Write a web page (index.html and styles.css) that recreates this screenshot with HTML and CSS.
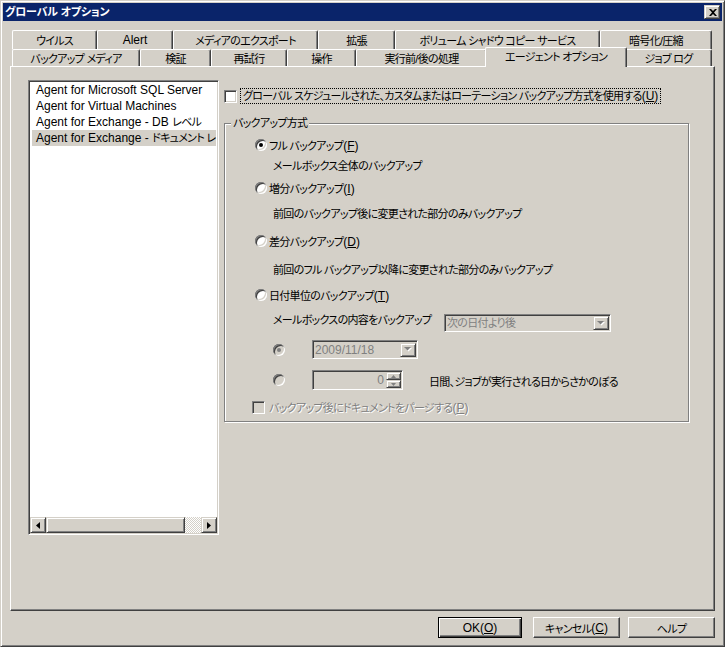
FILE: index.html
```html
<!DOCTYPE html>
<html lang="ja">
<head>
    <meta charset="UTF-8">
    <title>グローバル オプション</title>
    <link rel="stylesheet" href="styles.css">
</head>
<body>
    <div class="window">
        <div class="titlebar">
            <span class="title">グローバル オプション</span>
            <span class="close-btn raised">
                <svg width="8" height="7" viewBox="0 0 8 7"><path d="M0 0h2l2 2 2-2h2L5 3.5 8 7H6L4 5 2 7H0l3-3.5z" fill="#000"/></svg>
            </span>
        </div>

        <div class="content">
            <div class="tabs">
                <div class="tab-row row-top">
                    <div class="tab">ウイルス</div>
                    <div class="tab"><span class="lat">Alert</span></div>
                    <div class="tab">メディアのエクスポート</div>
                    <div class="tab">拡張</div>
                    <div class="tab">ボリューム シャドウ コピー サービス</div>
                    <div class="tab">暗号化/圧縮</div>
                </div>
                <div class="tab-row row-bottom">
                    <div class="tab">バックアップ メディア</div>
                    <div class="tab">検証</div>
                    <div class="tab">再試行</div>
                    <div class="tab">操作</div>
                    <div class="tab">実行前/後の処理</div>
                    <div class="tab active">エージェント オプション</div>
                    <div class="tab">ジョブ ログ</div>
                </div>
            </div>

            <div class="panel">
                <div class="agent-list sunken">
                    <ul class="items">
                        <li>Agent for Microsoft SQL Server</li>
                        <li>Agent for Virtual Machines</li>
                        <li>Agent for Exchange - DB <span class="jp">レベル</span></li>
                        <li class="selected">Agent for Exchange - <span class="jp">ドキュメント レベル</span></li>
                    </ul>
                    <div class="hscroll">
                        <span class="sb-btn raised">
                            <svg width="4" height="7" viewBox="0 0 4 7"><path d="M4 0v7L0 3.5z" fill="#000"/></svg>
                        </span>
                        <span class="sb-thumb raised"></span>
                        <span class="sb-track"></span>
                        <span class="sb-btn raised">
                            <svg width="4" height="7" viewBox="0 0 4 7"><path d="M0 0v7L4 3.5z" fill="#000"/></svg>
                        </span>
                    </div>
                </div>

                <div class="options">
                    <div class="check-row">
                        <span class="checkbox"></span>
                        <span class="focus-label">グローバル スケジュールされた、カスタムまたはローテーション バックアップ方式を使用する<span class="lat">(<u>U</u>)</span></span>
                    </div>

                    <div class="group">
                        <div class="group-title">バックアップ方式</div>

                        <div class="radio-row gap-7">
                            <span class="radio checked"></span>
                            <span>フル バックアップ<span class="lat">(<u>F</u>)</span></span>
                        </div>
                        <div class="desc gap-5">メールボックス全体のバックアップ</div>

                        <div class="radio-row gap-6">
                            <span class="radio"></span>
                            <span>増分バックアップ<span class="lat">(<u>I</u>)</span></span>
                        </div>
                        <div class="desc gap-10">前回のバックアップ後に変更された部分のみバックアップ</div>

                        <div class="radio-row gap-11">
                            <span class="radio"></span>
                            <span>差分バックアップ<span class="lat">(<u>D</u>)</span></span>
                        </div>
                        <div class="desc gap-13">前回のフル バックアップ以降に変更された部分のみバックアップ</div>

                        <div class="radio-row gap-9">
                            <span class="radio"></span>
                            <span>日付単位のバックアップ<span class="lat">(<u>T</u>)</span></span>
                        </div>

                        <div class="mailbox-row gap-11">
                            <span class="mailbox-label">メールボックスの内容をバックアップ</span>
                            <div class="combo sunken wide">
                                <span class="combo-text">次の日付より後</span>
                                <span class="combo-btn raised">
                                    <svg width="8" height="5" viewBox="0 0 8 5"><path d="M1 1h7L4.5 4.5z" fill="#fff"/><path d="M0 0h7L3.5 3.5z" fill="#808080"/></svg>
                                </span>
                            </div>
                        </div>

                        <div class="sub-row date-row gap-8">
                            <span class="radio disabled checked"></span>
                            <div class="combo sunken date">
                                <span class="combo-text lat">2009/11/18</span>
                                <span class="combo-btn raised">
                                    <svg width="8" height="5" viewBox="0 0 8 5"><path d="M1 1h7L4.5 4.5z" fill="#fff"/><path d="M0 0h7L3.5 3.5z" fill="#808080"/></svg>
                                </span>
                            </div>
                        </div>

                        <div class="sub-row spin-row gap-11">
                            <span class="radio disabled"></span>
                            <div class="spin sunken">
                                <span class="spin-value lat">0</span>
                                <span class="spin-btns">
                                    <span class="spin-btn raised">
                                        <svg width="5" height="3" viewBox="0 0 5 3"><path d="M0 3h5L2.5 0z" fill="#808080"/></svg>
                                    </span>
                                    <span class="spin-btn raised">
                                        <svg width="5" height="3" viewBox="0 0 5 3"><path d="M0 0h5L2.5 3z" fill="#808080"/></svg>
                                    </span>
                                </span>
                            </div>
                            <span class="days-label">日間、ジョブが実行される日からさかのぼる</span>
                        </div>

                        <div class="purge-row gap-9">
                            <span class="checkbox disabled"></span>
                            <span class="disabled-text">バックアップ後にドキュメントをパージする<span class="lat">(<u>P</u>)</span></span>
                        </div>
                    </div>
                </div>
            </div>

            <div class="buttons">
                <div class="btn default"><span class="lat">OK(<u>O</u>)</span></div>
                <div class="btn">キャンセル<span class="lat">(<u>C</u>)</span></div>
                <div class="btn">ヘルプ</div>
            </div>
        </div>
    </div>
</body>
</html>
```

FILE: styles.css
```css
* {
    box-sizing: border-box;
}
body {
    margin: 0;
    background: #d4d0c8;
    font-family: "Liberation Sans", "Noto Sans CJK JP", sans-serif;
    font-size: 12px;
    color: #000;
    font-feature-settings: "palt";
}
u {
    text-decoration: underline;
    text-underline-offset: 1px;
}

/* japanese text runs narrower in the original bitmap font */
.tab,
.options,
.btn,
.jp {
    font-size: 11px;
    letter-spacing: -0.7px;
}
.lat {
    font-size: 12px;
    letter-spacing: 0;
}

/* classic 3d edges */
.raised {
    background: #d4d0c8;
    border: 1px solid;
    border-color: #d4d0c8 #404040 #404040 #d4d0c8;
    box-shadow: inset 1px 1px #fff, inset -1px -1px #808080;
}
.sunken {
    border: 1px solid;
    border-color: #808080 #fff #fff #808080;
    box-shadow: inset 1px 1px #404040, inset -1px -1px #d4d0c8;
    padding: 1px;
}

.window {
    width: 725px;
    height: 647px;
    border: 1px solid;
    border-color: #d4d0c8 #404040 #404040 #d4d0c8;
    box-shadow: inset 1px 1px #fff, inset -1px -1px #808080;
    padding: 2px;
}
.titlebar {
    height: 18px;
    background: #0a246a;
    color: #fff;
    display: flex;
    align-items: center;
    padding: 0 2px;
}
.title {
    font-weight: bold;
    font-size: 11px;
    letter-spacing: -0.2px;
    line-height: 14px;
}
.close-btn {
    margin-left: auto;
    width: 16px;
    height: 14px;
    display: flex;
    align-items: center;
    justify-content: center;
    padding-left: 1px;
}

.content {
    padding: 0 7px;
}

/* tabs */
.tabs {
    margin-top: 9px;
}
.tab-row {
    display: flex;
    align-items: flex-start;
    padding-left: 2px;
}
.row-top {
    height: 19px;
}
.row-bottom {
    height: 17px;
}
.tab {
    height: 100%;
    display: flex;
    align-items: center;
    justify-content: center;
    white-space: nowrap;
    border-top: 1px solid #fff;
    border-left: 1px solid #fff;
    border-right: 1px solid #404040;
    border-radius: 2px 2px 0 0;
    box-shadow: inset -1px 0 #808080;
    background: #d4d0c8;
}
.row-top .tab:nth-child(1) { width: 85px; }
.row-top .tab:nth-child(2) { width: 76px; }
.row-top .tab:nth-child(3) { width: 145px; }
.row-top .tab:nth-child(4) { width: 77px; }
.row-top .tab:nth-child(5) { width: 205px; }
.row-top .tab:nth-child(6) { width: 112px; }
.row-bottom .tab:nth-child(1) { width: 128px; }
.row-bottom .tab:nth-child(2) { width: 71px; }
.row-bottom .tab:nth-child(3) { width: 76px; }
.row-bottom .tab:nth-child(4) { width: 69px; }
.row-bottom .tab:nth-child(5) { width: 131px; }
.row-bottom .tab:nth-child(7) { width: 87px; }
.row-bottom .tab.active {
    width: 142px;
    height: 20px;
    margin: -2px -2px -1px;
    padding-bottom: 3px;
    position: relative;
    z-index: 1;
}

/* tab page */
.panel {
    height: 545px;
    border-top: 1px solid #fff;
    border-left: 1px solid #fff;
    border-right: 1px solid #404040;
    border-bottom: 1px solid #404040;
    box-shadow: inset -1px -1px #808080;
    display: flex;
    align-items: flex-start;
    padding: 13px 0 0 17px;
}

.agent-list {
    width: 191px;
    height: 455px;
    background: #fff;
    display: flex;
    flex-direction: column;
}
.items {
    flex: 1;
    list-style: none;
    margin: 0;
    padding: 0;
    overflow: hidden;
}
.items li {
    height: 16px;
    line-height: 16px;
    padding-left: 6px;
    white-space: nowrap;
    overflow: hidden;
}
.items li.selected {
    background: #d4d0c8;
    margin: 0 1px 0 2px;
    padding-left: 4px;
}
.hscroll {
    height: 16px;
    display: flex;
}
.sb-btn {
    width: 16px;
    height: 16px;
    display: flex;
    align-items: center;
    justify-content: center;
}
.sb-thumb {
    width: 139px;
    height: 16px;
}
.sb-track {
    flex: 1;
    background: repeating-conic-gradient(#fff 0 25%, #d4d0c8 0 50%) 0 0 / 2px 2px;
}

.options {
    margin-left: 5px;
    padding-top: 8px;
}
.check-row {
    height: 16px;
    display: flex;
    align-items: center;
}
.checkbox {
    width: 13px;
    height: 13px;
    flex: none;
    background: #fff;
    border: 1px solid;
    border-color: #808080 #fff #fff #808080;
    box-shadow: inset 1px 1px #404040, inset -1px -1px #d4d0c8;
}
.checkbox.disabled {
    background: #d4d0c8;
}
.focus-label {
    margin-left: 3px;
    border: 1px dotted #000;
    padding: 0 2px;
    line-height: 14px;
    white-space: nowrap;
}

.group {
    margin-top: 19px;
    width: 465px;
    height: 299px;
    border: 1px solid #808080;
    box-shadow: inset 1px 1px #fff, 1px 1px #fff;
}
.group-title {
    display: table;
    margin: -8px 0 0 6px;
    padding: 0 2px;
    line-height: 14px;
    background: #d4d0c8;
}

.radio-row {
    height: 16px;
    display: flex;
    align-items: center;
    margin-left: 30px;
    white-space: nowrap;
}
.radio {
    width: 12px;
    height: 12px;
    flex: none;
    border-radius: 50%;
    background: #fff;
    box-shadow: inset 1px 1px #808080, inset -1px -1px #fff, inset 2px 2px #404040, inset -2px -2px #d4d0c8;
    display: flex;
    align-items: center;
    justify-content: center;
    margin-right: 2px;
}
.radio.checked::after {
    content: "";
    width: 4px;
    height: 4px;
    border-radius: 50%;
    background: #000;
}
.radio.disabled {
    background: #d4d0c8;
}
.radio.disabled.checked::after {
    background: #808080;
}
.desc {
    height: 16px;
    line-height: 16px;
    margin-left: 48px;
    white-space: nowrap;
}

.gap-5 { margin-top: 5px; }
.gap-6 { margin-top: 6px; }
.gap-7 { margin-top: 7px; }
.gap-8 { margin-top: 8px; }
.gap-9 { margin-top: 9px; }
.gap-10 { margin-top: 10px; }
.gap-11 { margin-top: 11px; }
.gap-13 { margin-top: 13px; }

.mailbox-row {
    height: 18px;
    display: flex;
    align-items: flex-start;
    margin-left: 48px;
}
.mailbox-label {
    width: 171px;
    line-height: 12px;
    white-space: nowrap;
}
.combo {
    height: 18px;
    background: #d4d0c8;
    display: flex;
    align-items: center;
    color: #808080;
}
.combo.wide {
    width: 167px;
}
.combo.date {
    width: 106px;
    height: 19px;
    margin-left: 25px;
}
.combo-text {
    flex: 1;
    padding-left: 1px;
    white-space: nowrap;
    line-height: 14px;
}
.combo-btn {
    width: 16px;
    height: 14px;
    display: flex;
    align-items: center;
    justify-content: center;
}

.sub-row {
    display: flex;
    align-items: center;
    margin-left: 48px;
}
.date-row {
    height: 19px;
}
.spin-row {
    height: 20px;
}
.spin {
    width: 91px;
    height: 20px;
    margin-left: 25px;
    background: #d4d0c8;
    display: flex;
    color: #808080;
}
.spin-value {
    flex: 1;
    text-align: right;
    padding-right: 2px;
    line-height: 16px;
}
.spin-btns {
    width: 15px;
    display: flex;
    flex-direction: column;
}
.spin-btn {
    flex: 1;
    display: flex;
    align-items: center;
    justify-content: center;
}
.days-label {
    margin-left: 26px;
    white-space: nowrap;
    padding-top: 2px;
}

.purge-row {
    height: 16px;
    display: flex;
    align-items: center;
    margin-left: 27px;
}
.disabled-text {
    margin-left: 4px;
    color: #808080;
    text-shadow: 1px 1px #fff;
    white-space: nowrap;
}

/* dialog buttons */
.buttons {
    margin-top: 6px;
    display: flex;
    justify-content: flex-end;
    gap: 8px;
}
.btn {
    width: 87px;
    height: 21px;
    display: flex;
    align-items: center;
    justify-content: center;
    background: #d4d0c8;
    border: 1px solid;
    border-color: #fff #404040 #404040 #fff;
    box-shadow: inset -1px -1px #808080;
    white-space: nowrap;
}
.btn.default {
    width: 84px;
    margin-right: 3px;
    border-color: #000;
    box-shadow: inset 1px 1px #fff, inset -1px -1px #404040, inset -2px -2px #808080;
}
```
